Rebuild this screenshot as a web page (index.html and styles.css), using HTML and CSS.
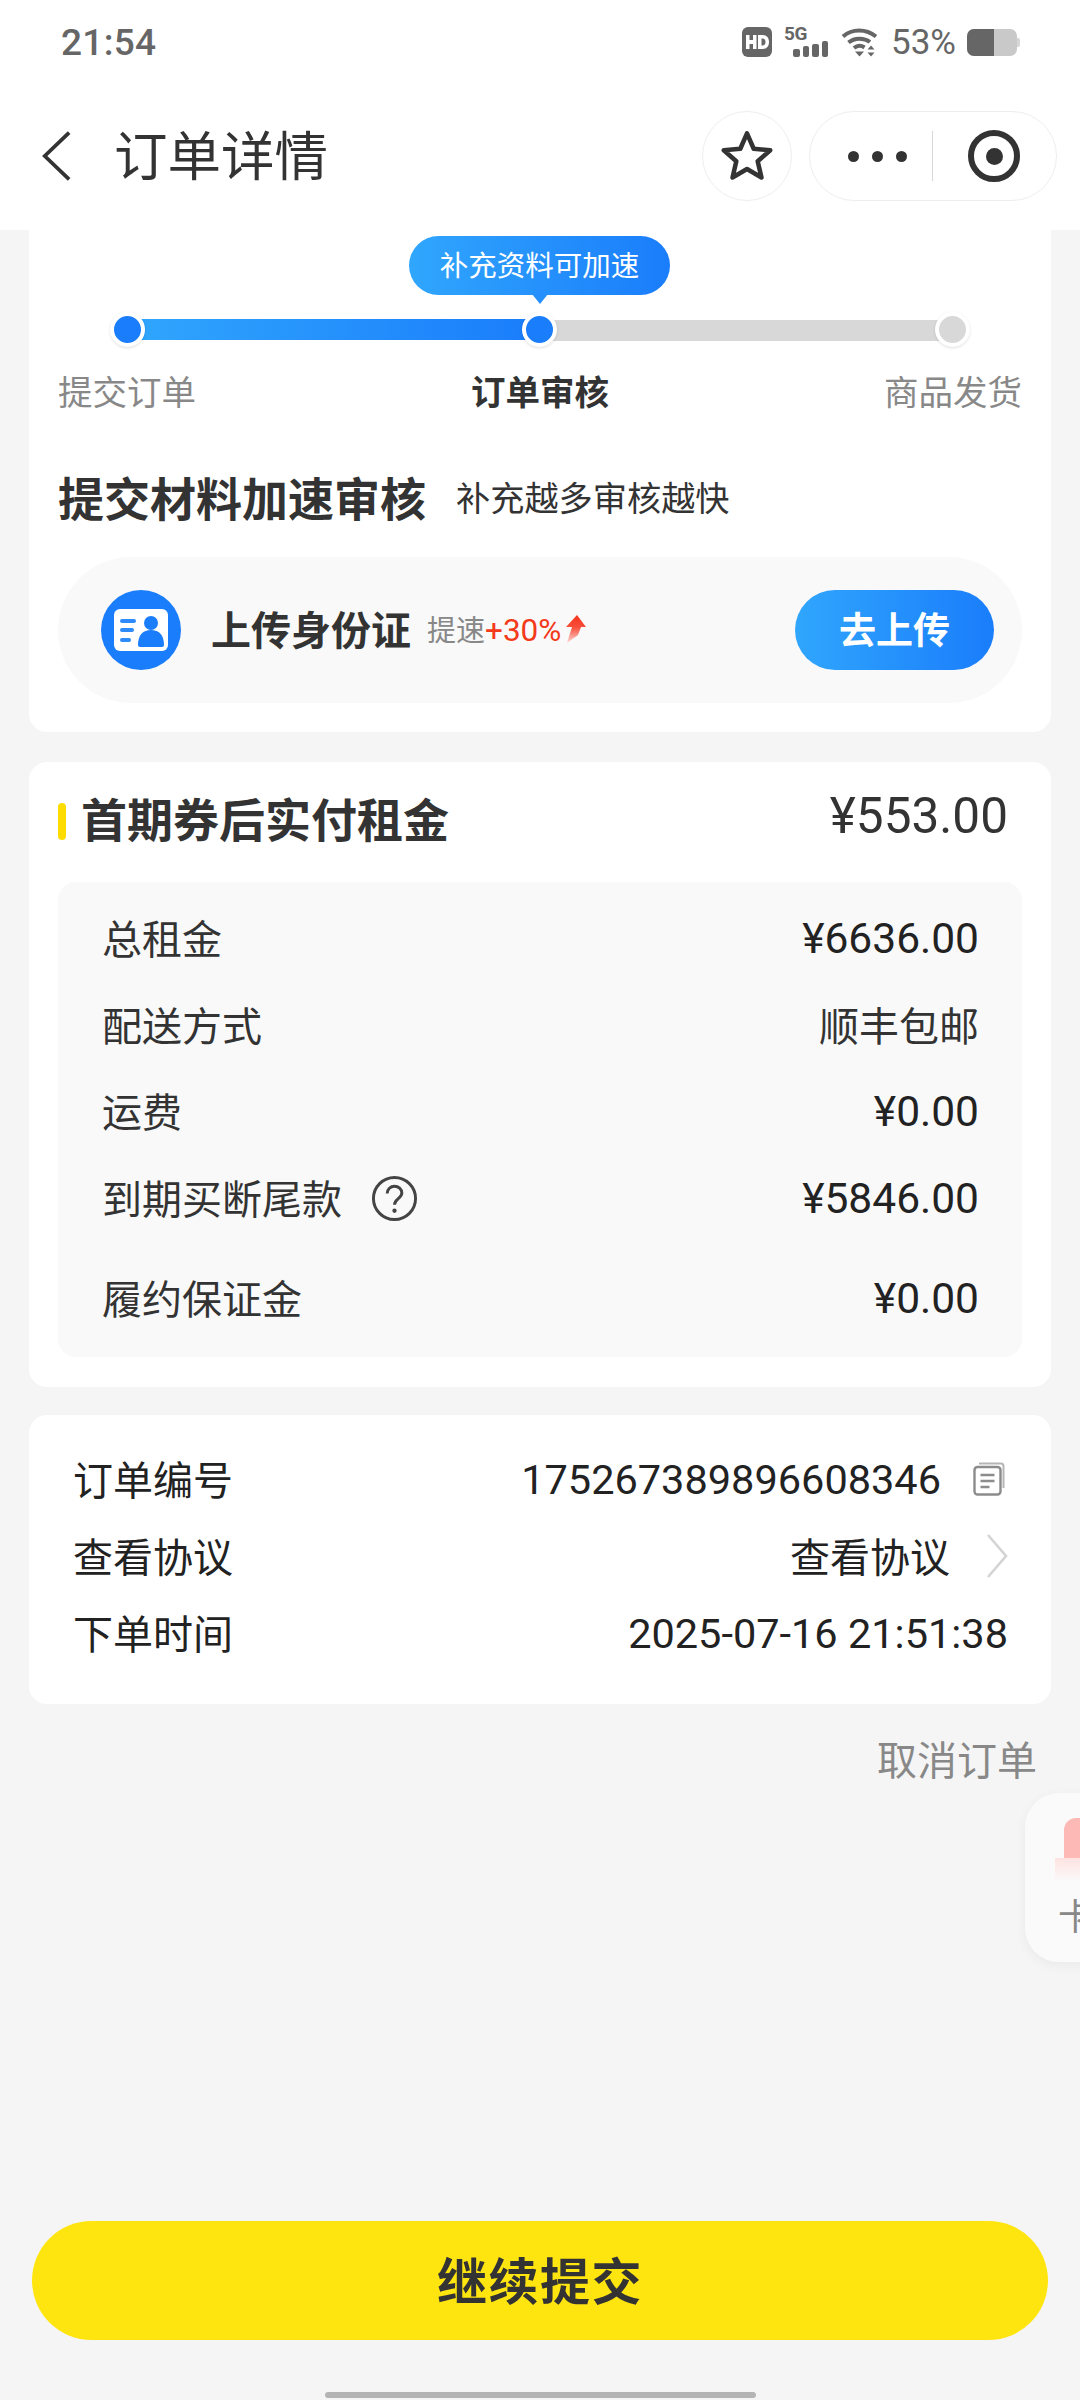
FILE: index.html
```html
<!DOCTYPE html>
<html lang="zh-CN">
<head>
<meta charset="utf-8">
<title>订单详情</title>
<link rel="stylesheet" href="styles.css">
</head>
<body>
<div class="page">
  <header class="header">
    <div class="status">
      <span class="time">21:54</span>
      <div class="status-right">
        <svg class="ic-hd" viewBox="0 0 30 30"><rect width="30" height="30" rx="6" fill="#666"/><path d="M4 8h3.500v5h3.500V8h3.500v14H11v-5H7.500v5H4z" fill="#fff"/><path fill-rule="evenodd" d="M16 8h4.500c4.500 0 6.500 3 6.500 7s-2 7-6.500 7H16zM19.500 11.500v7h1c2 0 3-1.500 3-3.500s-1-3.500-3-3.500z" fill="#fff"/></svg>
        <div class="sig">
          <span class="sig-5g">5G</span>
          <div class="bars"><i class="b1"></i><i class="b2"></i><i class="b3"></i><i class="b4"></i></div>
        </div>
        <svg class="ic-wifi" viewBox="0 0 38 30"><path d="M2 9.500C11 1.500 25 1.500 35 9.500" fill="none" stroke="#666" stroke-width="4"/><path d="M7.500 15.500C13.500 10.500 23 10.500 29 15" fill="none" stroke="#666" stroke-width="4"/><path d="M13 21c3.500-3 7-3 10.500-.5" fill="none" stroke="#666" stroke-width="4"/><path d="M14 24.500h9l-4.500 5z" fill="#666"/><path d="M30 18.500l3.500 4h-7zM30 29.500l3.500-4h-7z" fill="#666"/></svg>
        <span class="pct">53%</span>
        <div class="batt"><div class="batt-fill"></div><div class="batt-tip"></div></div>
      </div>
    </div>
    <div class="nav">
      <svg class="ic-back" viewBox="0 0 32 54"><path d="M30 2L4 27l26 25" fill="none" stroke="#333" stroke-width="4"/></svg>
      <h1 class="nav-title">订单详情</h1>
      <div class="star-btn">
        <svg class="ic-star" viewBox="0 0 50 50"><path d="M25 4l6.200 14.300 15.300 1.400-11.600 10.100 3.500 15.100L25 37l-13.400 7.900 3.500-15.100L3.500 19.700l15.300-1.400z" fill="none" stroke="#333" stroke-width="4.200" stroke-linejoin="round"/></svg>
      </div>
      <div class="capsule">
        <div class="dots"><i></i><i></i><i></i></div>
        <div class="cap-line"></div>
        <div class="target"><i></i></div>
      </div>
    </div>
  </header>

  <main class="content">
    <section class="card card-top">
      <div class="steps">
        <div class="tip">补充资料可加速</div>
        <div class="track">
          <div class="seg seg-on"></div>
          <div class="seg seg-off"></div>
          <span class="node node-a"></span>
          <span class="node node-b"></span>
          <span class="node node-c"></span>
        </div>
        <div class="step-labels"><span>提交订单</span><b>订单审核</b><span>商品发货</span></div>
      </div>
      <div class="speed-head">
        <h2 class="h2">提交材料加速审核</h2>
        <span class="speed-sub">补充越多审核越快</span>
      </div>
      <div class="upload">
        <svg class="ic-id" viewBox="0 0 80 80"><circle cx="40" cy="40" r="40" fill="#1a7dfb"/><rect x="13" y="19" width="54" height="42" rx="6" fill="#fff"/><rect x="19" y="29" width="16" height="4" rx="2" fill="#2e8bfb"/><rect x="19" y="38" width="14" height="4" rx="2" fill="#2e8bfb"/><rect x="19" y="48" width="11" height="4" rx="2" fill="#2e8bfb"/><circle cx="50" cy="33" r="7" fill="#1a7dfb"/><path d="M37 55c0-10 5-15 13-15s13 5 13 15c0 1-1 2-2 2H39c-1 0-2-1-2-2z" fill="#1a7dfb"/></svg>
        <span class="up-title">上传身份证</span>
        <span class="up-gain">提速<em>+30%</em></span>
        <svg class="ic-up" viewBox="0 0 22 28"><defs><linearGradient id="upg" x1="0" y1="0" x2="0" y2="1"><stop offset="0" stop-color="#f6331c"/><stop offset=".45" stop-color="#f8503c"/><stop offset="1" stop-color="#fcdcd8"/></linearGradient></defs><path d="M13 0l9 12h-5l-3 8-11 8 5-16H2z" fill="url(#upg)"/></svg>
        <div class="go-btn">去上传</div>
      </div>
    </section>

    <section class="card card-fee">
      <div class="fee-head">
        <i class="bar"></i>
        <h2 class="h2">首期券后实付租金</h2>
        <span class="fee-total">¥553.00</span>
      </div>
      <div class="fee-box">
        <div class="fee-row"><span>总租金</span><span class="num">¥6636.00</span></div>
        <div class="fee-row"><span>配送方式</span><span>顺丰包邮</span></div>
        <div class="fee-row"><span>运费</span><span class="num">¥0.00</span></div>
        <div class="fee-row"><span class="with-q">到期买断尾款<svg class="ic-q" viewBox="0 0 48 48"><circle cx="24" cy="24" r="21.500" fill="none" stroke="#444" stroke-width="3"/><path d="M16.500 19c0-4.500 3.500-7.500 7.500-7.500s7.500 2.800 7.500 7c0 5.500-7.500 6-7.500 12" fill="none" stroke="#444" stroke-width="3"/><circle cx="24" cy="36.500" r="2.200" fill="#444"/></svg></span><span class="num">¥5846.00</span></div>
        <div class="fee-row fee-last"><span>履约保证金</span><span class="num">¥0.00</span></div>
      </div>
    </section>

    <section class="card card-info">
      <div class="info-row"><span>订单编号</span><span class="info-val"><span class="num">175267389896608346</span><svg class="ic-copy" viewBox="0 0 32 34"><rect x="1.500" y="5" width="26" height="27.500" rx="3" fill="none" stroke="#8c8c8c" stroke-width="2.400"/><path d="M6 1.500h22c2 0 2.500 1 2.500 2.500v22" fill="none" stroke="#b5b5b5" stroke-width="2"/><path d="M7.500 13h14M7.500 19h14M7.500 25h9" stroke="#8c8c8c" stroke-width="2.400"/></svg></span></div>
      <div class="info-row"><span>查看协议</span><span class="info-val"><span>查看协议</span><svg class="ic-more" viewBox="0 0 22 46"><path d="M2 2l18 21L2 44" fill="none" stroke="#d4d4d4" stroke-width="2.600"/></svg></span></div>
      <div class="info-row"><span>下单时间</span><span class="num">2025-07-16 21:51:38</span></div>
    </section>

    <div class="cancel">取消订单</div>
  </main>

  <div class="float-card">
    <div class="float-pic"></div>
    <div class="float-glow"></div>
    <span class="float-text">卡</span>
  </div>

  <footer class="footer">
    <div class="submit">继续提交</div>
    <div class="home-bar"></div>
  </footer>
</div>
</body>
</html>
```

FILE: styles.css
```css
* { box-sizing: border-box; }
html, body { margin: 0; padding: 0; }
body { font-family: "Noto Sans CJK SC", "Noto Sans", sans-serif; color: #333; background: #f5f5f5; overflow: hidden; }
h1, h2 { margin: 0; font-weight: 700; }
.page { position: relative; width: 1080px; height: 2400px; display: flex; flex-direction: column; overflow: hidden; background: #f5f5f5; }

.header { background: #fff; height: 230px; flex: none; }
.status { height: 84px; display: flex; align-items: center; justify-content: space-between; padding: 0 63px 0 61px; }
.time { font: 500 37px/1 Roboto, sans-serif; color: #666; letter-spacing: .3px; }
.status-right { display: flex; align-items: center; }
.ic-hd { width: 30px; height: 30px; margin-right: 12px; }
.sig { position: relative; width: 44px; height: 30px; margin-right: 13px; }
.sig-5g { position: absolute; left: 0; top: -3px; font: 700 19px/19px Roboto, sans-serif; color: #666; letter-spacing: -.5px; }
.bars { position: absolute; right: 0; bottom: 0; display: flex; align-items: flex-end; gap: 3px; }
.bars i { width: 6.500px; background: #666; border-radius: 2px; }
.bars .b1 { height: 8px; } .bars .b2 { height: 11px; } .bars .b3 { height: 13px; } .bars .b4 { height: 16px; }
.ic-wifi { width: 38px; height: 30px; margin-right: 12px; }
.pct { font: 400 35px/1 Roboto, sans-serif; color: #666; margin-right: 11px; }
.batt { position: relative; width: 50px; height: 27px; border-radius: 7px; background: #c9c9c9; overflow: visible; }
.batt-fill { width: 27px; height: 27px; background: #666; border-radius: 7px 0 0 7px; }
.batt-tip { position: absolute; right: -3px; top: 9px; width: 3px; height: 9px; background: #d6d6d6; border-radius: 0 2px 2px 0; }

.nav { height: 146px; display: flex; align-items: flex-start; padding: 27px 23px 0 41px; }
.ic-back { width: 30px; height: 54px; margin-top: 18px; flex: none; }
.nav-title { font-size: 53.500px; line-height: 84px; font-weight: 400; color: #333; margin-left: 43px; flex: 1; }
.star-btn { width: 90px; height: 90px; border: 1px solid #eee; border-radius: 50%; display: flex; align-items: center; justify-content: center; }
.ic-star { width: 54px; height: 54px; }
.capsule { width: 248px; height: 90px; margin-left: 17px; border: 1px solid #eee; border-radius: 45px; display: flex; align-items: center; }
.dots { width: 122px; display: flex; justify-content: flex-end; gap: 13px; padding-right: 25px; }
.dots i { width: 11px; height: 11px; border-radius: 50%; background: #333; }
.cap-line { width: 1px; height: 50px; background: #d8d8d8; }
.target { width: 52px; height: 52px; margin-left: 35px; border: 6px solid #333; border-radius: 50%; display: flex; align-items: center; justify-content: center; }
.target i { width: 17px; height: 17px; background: #333; border-radius: 50%; }

.content { padding: 0 29px; flex: 1; }
.card { background: #fff; border-radius: 18px; }
.card-top { height: 502px; border-radius: 0 0 18px 18px; padding: 0 29px; }
.steps { position: relative; height: 196px; }
.tip { position: absolute; left: 351px; top: 6px; width: 261px; height: 59px; border-radius: 30px; background: linear-gradient(90deg, #30a6fd, #1a7dfb); color: #fff; font-size: 28.500px; line-height: 55px; text-align: center; }
.tip::after { content: ""; position: absolute; left: 123px; top: 58px; border: 8px solid transparent; border-top: 10px solid #2590fc; border-bottom: 0; }
.track { position: absolute; left: 69px; right: 70px; top: 89px; height: 21px; display: flex; }
.seg { height: 100%; }
.seg-on { flex: 1; background: linear-gradient(90deg, #30a6fd, #1a7dfb); }
.seg-off { flex: 1; background: #d8d8d8; margin: 1px 0; }
.node { position: absolute; top: 50%; width: 35px; height: 35px; margin: -17.500px 0 0 -17.500px; border-radius: 50%; border: 4px solid #fff; box-shadow: 0 1px 3px rgba(0,0,0,.12); background: #1a7dfb; }
.node-a { left: 0; }
.node-b { left: 50%; }
.node-c { left: 100%; background: #d8d8d8; }
.step-labels { position: absolute; left: 0; right: 0; top: 137px; display: flex; justify-content: space-between; font-size: 34.500px; line-height: 46px; color: #888; }
.step-labels b { color: #333; font-weight: 700; }
.speed-head { height: 100px; margin-top: 27px; display: flex; align-items: flex-start; padding-top: 13px; }
.h2 { font-size: 46px; line-height: 60px; color: #333; }
.speed-sub { font-size: 34.200px; line-height: 60px; margin-left: 30px; color: #333; }
.upload { height: 146px; margin-top: 4px; border-radius: 73px; background: #f9f9f9; display: flex; align-items: center; padding: 0 28px 0 43px; }
.ic-id { width: 80px; height: 80px; flex: none; }
.up-title { font-size: 40px; font-weight: 700; margin: 0 0 5px 30px; color: #333; }
.up-gain { font-size: 29px; color: #888; margin: 0 0 4px 16px; }
.up-gain em { font: 400 31.500px Roboto, sans-serif; color: #f33a1a; }
.ic-up { width: 22px; height: 28px; margin: 0 0 2px 3px; }
.go-btn { margin-left: auto; width: 199px; height: 80px; border-radius: 40px; background: linear-gradient(90deg, #30a6fd, #1a7dfb); color: #fff; font-size: 37px; font-weight: 700; text-align: center; line-height: 76px; }

.num { font-family: Roboto, sans-serif; }
.card-fee { height: 625px; margin-top: 30px; padding: 0 29px; }
.fee-head { height: 120px; display: flex; align-items: center; }
.fee-head .h2 { margin: -10px 0 0 -1px; }
.bar { width: 8px; height: 37px; background: #ffdc00; border-radius: 4px; margin: -2px 16px 0 0; }
.fee-total { margin: -10px 14px 0 auto; font: 400 49.500px/1 Roboto, sans-serif; color: #333; }
.fee-box { height: 475px; background: #f9f9f9; border-radius: 18px; padding: 12px 43px 0 44px; }
.fee-row { height: 86.500px; display: flex; justify-content: space-between; align-items: center; font-size: 40px; color: #333; }
.fee-row .num { font-size: 42.500px; color: #222; margin-top: 3px; }
.fee-row.fee-last { margin-top: 13.500px; }
.with-q { display: flex; align-items: center; }
.ic-q { width: 47px; height: 47px; margin: 4px 0 0 29px; }

.card-info { height: 289px; margin-top: 28px; padding: 24px 43px 0 44px; }
.info-row { height: 77px; display: flex; justify-content: space-between; align-items: center; font-size: 40px; color: #222; }
.info-row .num { font-size: 41.500px; margin-top: 3px; }
.info-val { display: flex; align-items: center; }
.ic-copy { width: 32px; height: 34px; margin: 3px 3px 0 32px; }
.ic-more { width: 22px; height: 46px; margin: 2px 0 0 36px; }
.cancel { font-size: 40px; line-height: 56px; color: #888; text-align: right; margin: 26px 14px 0 0; }

.float-card { position: absolute; left: 1025px; top: 1793px; width: 110px; height: 169px; background: #fafafa; border-radius: 34px 0 0 34px; box-shadow: 0 3px 12px rgba(0,0,0,.05); }
.float-pic { position: absolute; left: 39px; top: 25px; width: 60px; height: 40px; background: #fcb9b5; border-radius: 12px 0 0 0; }
.float-glow { position: absolute; left: 30px; top: 65px; width: 60px; height: 24px; background: linear-gradient(#fde3e1, #fafafa); }
.float-text { position: absolute; left: 33px; top: 96px; font-size: 36px; line-height: 50px; color: #888; }

.footer { flex: none; height: 179px; padding: 0 32px; position: relative; }
.submit { height: 119px; border-radius: 60px; background: #ffe50f; color: #333; font-size: 50px; font-weight: 700; text-align: center; line-height: 115px; letter-spacing: 1.500px; }
.home-bar { position: absolute; left: 325px; top: 171px; width: 431px; height: 6px; border-radius: 3px; background: #b4b4b4; }
```
